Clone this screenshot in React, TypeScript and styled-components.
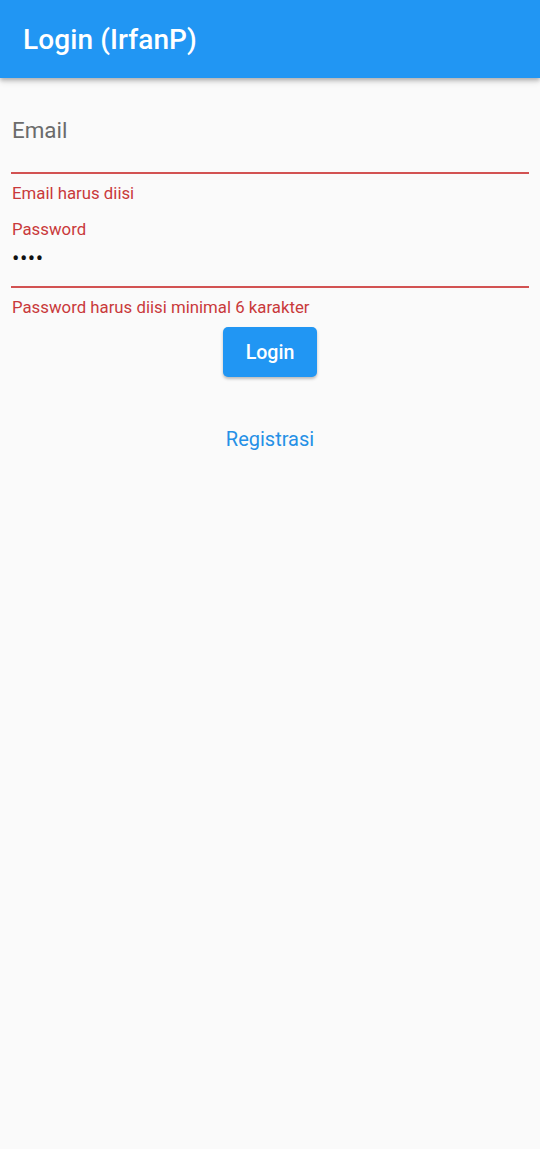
import React from "react";
import styled, { createGlobalStyle } from "styled-components";

const Global = createGlobalStyle`
  html, body { margin: 0; padding: 0; background: #fafafa; }
  body { font-family: Roboto, "Noto Sans", sans-serif; -webkit-font-smoothing: antialiased; }
`;

const Page = styled.div`
  width: 540px;
  min-height: 1149px;
  background: #fafafa;
  display: flex;
  flex-direction: column;
`;

const AppBar = styled.header`
  height: 78px;
  background: #2196f3;
  display: flex;
  align-items: center;
  padding-left: 23px;
  box-shadow: 0 2px 4px rgba(0, 0, 0, 0.22), 0 4px 6px rgba(0, 0, 0, 0.12);
  position: relative;
  z-index: 1;
`;

const Title = styled.h1`
  margin: 0;
  font-size: 28px;
  font-weight: 500;
  color: #ffffff;
  letter-spacing: 0.1px;
`;

const Form = styled.main`
  display: flex;
  flex-direction: column;
  padding: 0 11px 0 11px;
`;

const Field = styled.div<{ $top: number }>`
  display: flex;
  flex-direction: column;
  margin-top: ${(p) => p.$top}px;
  padding: 0 1px;
  border-bottom: 2px solid #d25252;
`;

const BigLabel = styled.div`
  font-size: 22.4px;
  line-height: 26px;
  color: #6b6b6b;
  padding-top: 14px;
  padding-bottom: 29px;
`;

const SmallLabel = styled.div`
  font-size: 16.8px;
  line-height: 20px;
  color: #c9393a;
`;

const Dots = styled.div`
  font-size: 22px;
  line-height: 24px;
  color: #111;
  letter-spacing: 0.5px;
  padding-top: 8px;
  padding-bottom: 15px;
`;

const ErrorText = styled.div`
  font-size: 16.8px;
  line-height: 20px;
  color: #c9393a;
  padding: 0 1px;
  margin-top: 9px;
`;

const Center = styled.div<{ $top: number }>`
  display: flex;
  justify-content: center;
  margin-top: ${(p) => p.$top}px;
`;

const LoginButton = styled.button`
  width: 94px;
  height: 50px;
  border: none;
  border-radius: 5px;
  background: #2196f3;
  color: #fff;
  font-family: Roboto, sans-serif;
  font-size: 19.6px;
  font-weight: 500;
  box-shadow: 0 2px 3px rgba(0, 0, 0, 0.25);
  padding: 0;
`;

const LinkButton = styled.button`
  border: none;
  background: transparent;
  color: #2590e6;
  font-family: Roboto, sans-serif;
  font-size: 20px;
  padding: 0;
`;

export default function App() {
  return (
    <Page>
      <Global />
      <AppBar>
        <Title>Login (IrfanP)</Title>
      </AppBar>
      <Form>
        <Field $top={25}>
          <BigLabel>Email</BigLabel>
        </Field>
        <ErrorText>Email harus diisi</ErrorText>
        <Field $top={16}>
          <SmallLabel>Password</SmallLabel>
          <Dots>••••</Dots>
        </Field>
        <ErrorText>Password harus diisi minimal 6 karakter</ErrorText>
        <Center $top={10}>
          <LoginButton>Login</LoginButton>
        </Center>
        <Center $top={50}>
          <LinkButton>Registrasi</LinkButton>
        </Center>
      </Form>
    </Page>
  );
}
